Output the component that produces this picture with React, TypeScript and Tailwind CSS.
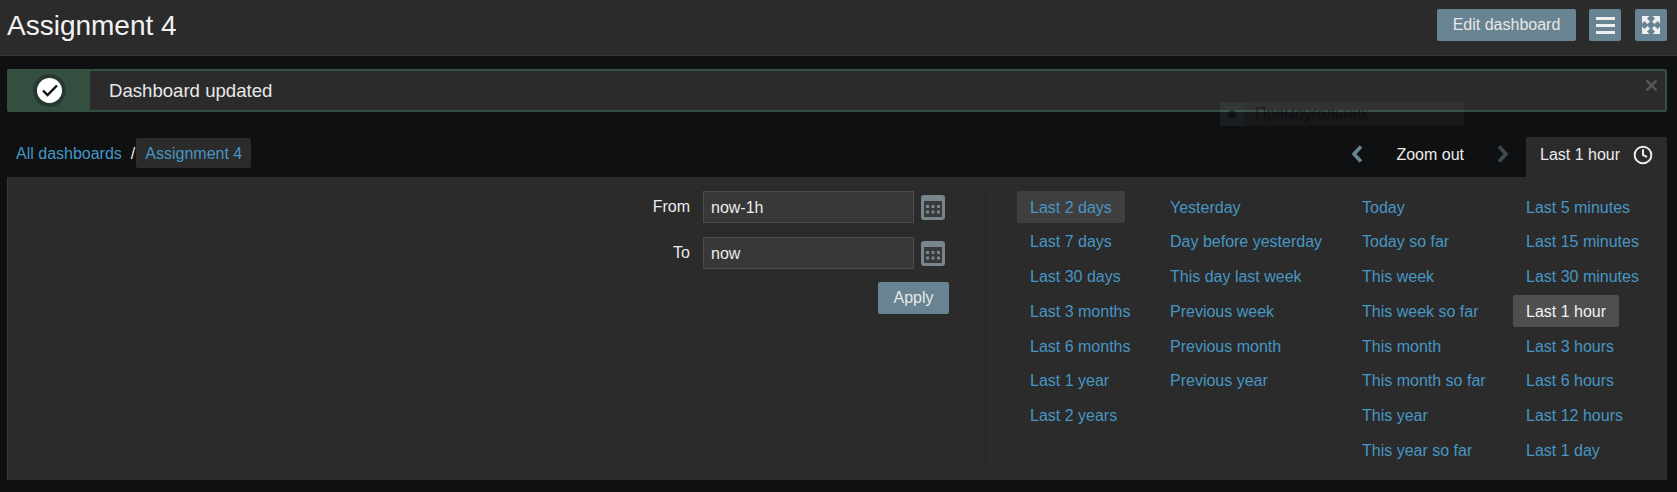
import React from 'react';
import { Clock, X } from 'lucide-react';

const linkColumns = [
  { width: 'w-[140px]', items: ['Last 2 days', 'Last 7 days', 'Last 30 days', 'Last 3 months', 'Last 6 months', 'Last 1 year', 'Last 2 years'] },
  { width: 'w-[192px]', items: ['Yesterday', 'Day before yesterday', 'This day last week', 'Previous week', 'Previous month', 'Previous year'] },
  { width: 'w-[164px]', items: ['Today', 'Today so far', 'This week', 'This week so far', 'This month', 'This month so far', 'This year', 'This year so far'] },
  { width: 'w-[141px]', items: ['Last 5 minutes', 'Last 15 minutes', 'Last 30 minutes', 'Last 1 hour', 'Last 3 hours', 'Last 6 hours', 'Last 12 hours', 'Last 1 day'] },
];

function CalendarIcon() {
  return (
    <svg width="24" height="25" viewBox="0 0 24 25" className="shrink-0">
      <rect x="0" y="0" width="24" height="25" rx="3" fill="#78868c" />
      <rect x="3" y="6" width="18" height="16" fill="#37393a" />
      <g fill="#78868c">
        <rect x="5" y="10" width="3" height="3" />
        <rect x="10.5" y="10" width="3" height="3" />
        <rect x="16" y="10" width="3" height="3" />
        <rect x="5" y="15.5" width="3" height="3" />
        <rect x="10.5" y="15.5" width="3" height="3" />
        <rect x="16" y="15.5" width="3" height="3" />
      </g>
    </svg>
  );
}

function FullscreenIcon() {
  return (
    <svg width="20" height="20" viewBox="0 0 20 20" fill="#eeeeee">
      <path d="M1 1h7.5L6 3.5l3 3L6.5 9l-3-3L1 8.5z" />
      <path d="M19 1h-7.5L14 3.5l-3 3L13.5 9l3-3L19 8.5z" />
      <path d="M1 19h7.5L6 16.5l3-3L6.5 11l-3 3L1 11.5z" />
      <path d="M19 19h-7.5l2.5-2.5-3-3 2.5-2.5 3 3 2.5-2.5z" />
    </svg>
  );
}

function Chevron({ direction, color }: { direction: 'left' | 'right'; color: string }) {
  return (
    <svg width="12" height="18" viewBox="0 0 12 18" fill="none" stroke={color} strokeWidth="3.6" className="shrink-0">
      <path d={direction === 'left' ? 'M10 1.5 3 9l7 7.5' : 'M2 1.5 9 9l-7 7.5'} />
    </svg>
  );
}

function DateRow({ label, value }: { label: string; value: string }) {
  return (
    <div className="flex items-center">
      <span className="w-[56px] text-right text-[#ececec]">{label}</span>
      <input
        readOnly
        value={value}
        className="ml-[13px] h-[32px] w-[211px] border border-[#4b4b4b] bg-[#383838] px-[7px] pt-[2px] text-[#ececec] outline-none"
      />
      <span className="ml-[7px]">
        <CalendarIcon />
      </span>
    </div>
  );
}

export default function App() {
  return (
    <div className="relative h-[492px] w-[1677px] overflow-hidden bg-[#0e1012] font-['Liberation_Sans',Arial,sans-serif] text-[16px]">
      {/* Header */}
      <header className="flex h-[56px] items-start justify-between border-b border-[#383838] bg-[#2b2b2b] pl-[7px] pr-[10px]">
        <h1 className="mt-[12px] text-[28px] leading-none font-normal text-[#f2f2f2]">Assignment 4</h1>
        <div className="mt-[9px] flex items-center">
          <button className="h-[32px] w-[139px] rounded-[2px] bg-[#688391] text-[#e8e8e8]">Edit dashboard</button>
          <button className="ml-[13px] flex h-[32px] w-[32px] flex-col items-center justify-center gap-[4px] rounded-[2px] bg-[#688391]">
            <span className="h-[3px] w-[19px] bg-[#eeeeee]" />
            <span className="h-[3px] w-[19px] bg-[#eeeeee]" />
            <span className="h-[3px] w-[19px] bg-[#eeeeee]" />
          </button>
          <button className="ml-[14px] flex h-[32px] w-[32px] items-center justify-center rounded-[2px] bg-[#688391]">
            <FullscreenIcon />
          </button>
        </div>
      </header>

      {/* Message */}
      <div className="relative ml-[7px] mt-[13px] flex h-[43px] w-[1660px] rounded-[2px] border-2 border-[#344f3f] bg-[#2b2b2b]">
        <div className="flex w-[81px] shrink-0 items-center justify-center bg-[#344f3f]">
          <span className="flex h-[33px] w-[33px] items-center justify-center rounded-full bg-[#28392f]">
            <span className="flex h-[25px] w-[25px] items-center justify-center rounded-full bg-white">
              <svg width="16" height="13" viewBox="0 0 16 13" fill="none" stroke="#111" strokeWidth="2.3">
                <path d="M1 6.5 5.5 11 15 1.5" />
              </svg>
            </span>
          </span>
        </div>
        <span className="ml-[19px] self-center pt-[1px] text-[18.6px] text-[#e8e8e8]">Dashboard updated</span>
        <X size={17} strokeWidth={3.5} className="absolute right-[5px] top-[6px] text-[#555555]" />
      </div>

      {/* Breadcrumbs and time tabs */}
      <nav className="mt-[25px] flex h-[40px] items-start pl-[16px] pr-[10px]">
        <div className="flex h-[31px] items-center">
          <a className="pt-[2px] text-[#4796c4]">All dashboards</a>
          <span className="ml-[9px] pt-[2px] text-[#ececec]">/</span>
          <a className="ml-[1px] flex h-[30px] items-center rounded-[2px] bg-[#2b2b2b] px-[9px] pt-[2px] text-[#4796c4]">Assignment 4</a>
        </div>
        <div className="ml-auto flex h-[40px] items-center">
          <span className="pb-[6px]">
            <Chevron direction="left" color="#688391" />
          </span>
          <span className="ml-[33px] pb-[4px] text-[#ececec]">Zoom out</span>
          <span className="ml-[33px] pb-[6px]">
            <Chevron direction="right" color="#3f4b52" />
          </span>
          <div className="ml-[17px] flex h-[40px] w-[141px] items-center rounded-t-[2px] bg-[#2b2b2b] pl-[14px] pb-[4px] text-[#ececec]">
            Last 1 hour
            <Clock size={20} strokeWidth={2.4} className="ml-[13px]" />
          </div>
        </div>
      </nav>

      {/* Time selector */}
      <section className="ml-[7px] flex h-[303px] w-[1660px] border-l border-[#383838] bg-[#2b2b2b] pt-[14px]">
        <div className="flex h-[275px] w-[983px] shrink-0 justify-end border-r border-[#303030] pr-[40px]">
          <div className="flex w-[316px] flex-col">
            <DateRow label="From" value="now-1h" />
            <div className="mt-[14px]">
              <DateRow label="To" value="now" />
            </div>
            <button className="ml-[244px] mt-[13px] h-[32px] w-[71px] rounded-[2px] bg-[#688391] text-[#e8e8e8]">Apply</button>
          </div>
        </div>
        <div className="ml-[39px] flex">
          {linkColumns.map((column) => (
            <ul key={column.items[0]} className={column.width}>
              {column.items.map((item) => {
                const active = item === 'Last 1 hour';
                const hovered = item === 'Last 2 days';
                return (
                  <li key={item} className="h-[34.7px]">
                    <a
                      className={`-ml-[13px] inline-flex h-[32px] items-center rounded-[2px] px-[13px] pt-[1.6px] ${
                        active ? 'bg-[#4f4f4f] text-[#f2f2f2]' : hovered ? 'bg-[#3f3f3f] text-[#4796c4]' : 'text-[#4796c4]'
                      }`}
                    >
                      {item}
                    </a>
                  </li>
                );
              })}
            </ul>
          ))}
        </div>
      </section>

      {/* Faded tooltip left over behind the message */}
      <div className="pointer-events-none absolute left-[1220px] top-[102px] flex h-[24px] w-[244px] items-center bg-white/[0.035] text-black/40">
        <span className="flex h-[24px] w-[24px] items-center justify-center bg-[#3f8fc0]/[0.06]">
          <span className="h-[8px] w-[8px] rounded-full bg-black/40" />
        </span>
        <span className="ml-[11px]">Прямоугольник</span>
      </div>
    </div>
  );
}
